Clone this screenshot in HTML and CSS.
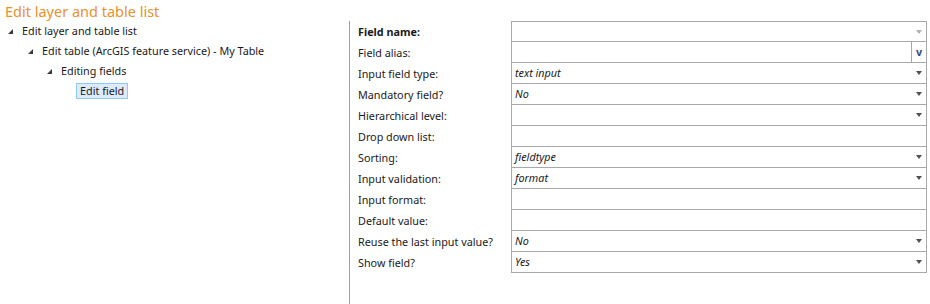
FILE: index.html
```html
<!DOCTYPE html>
<html lang="en">
<head>
    <meta charset="UTF-8">
    <title>Edit layer and table list</title>
    <link rel="stylesheet" href="styles.css">
</head>
<body>
    <div class="title">Edit layer and table list</div>
    <div class="main">
        <div class="tree">
            <div class="node lvl1"><span class="tri"></span>Edit layer and table list</div>
            <div class="node lvl2"><span class="tri"></span>Edit table (ArcGIS feature service) - My Table</div>
            <div class="node lvl3"><span class="tri"></span>Editing fields</div>
            <div class="node lvl4"><span class="sel">Edit field</span></div>
        </div>
        <div class="props">
            <div class="label bold">Field name:</div>
            <div class="field first"><span class="value"></span><span class="arrow off"></span></div>

            <div class="label">Field alias:</div>
            <div class="field"><span class="value"></span><span class="vbtn">v</span></div>

            <div class="label">Input field type:</div>
            <div class="field"><span class="value">text input</span><span class="arrow"></span></div>

            <div class="label">Mandatory field?</div>
            <div class="field"><span class="value">No</span><span class="arrow"></span></div>

            <div class="label">Hierarchical level:</div>
            <div class="field"><span class="value"></span><span class="arrow"></span></div>

            <div class="label">Drop down list:</div>
            <div class="field"><span class="value"></span></div>

            <div class="label">Sorting:</div>
            <div class="field"><span class="value">fieldtype</span><span class="arrow"></span></div>

            <div class="label">Input validation:</div>
            <div class="field"><span class="value">format</span><span class="arrow"></span></div>

            <div class="label">Input format:</div>
            <div class="field"><span class="value"></span></div>

            <div class="label">Default value:</div>
            <div class="field"><span class="value"></span></div>

            <div class="label">Reuse the last input value?</div>
            <div class="field"><span class="value">No</span><span class="arrow"></span></div>

            <div class="label">Show field?</div>
            <div class="field"><span class="value">Yes</span><span class="arrow"></span></div>
        </div>
    </div>
</body>
</html>
```

FILE: styles.css
```css
body {
    font-family: 'Noto Sans', 'Open Sans', sans-serif;
    font-size: 10.8px;
    color: #1a1a1a;
    background: #fff;
    margin: 0;
    padding: 0;
    height: 304px;
    overflow: hidden;
}
.title {
    color: #e8912d;
    font-size: 14.5px;
    height: 21px;
    line-height: 22px;
    padding-left: 5px;
}
.main {
    display: flex;
    height: 283px;
}
.tree {
    width: 349px;
}
.node {
    height: 20px;
    line-height: 20px;
    display: flex;
    align-items: center;
}
.lvl1 { padding-left: 8px; }
.lvl2 { padding-left: 28px; }
.lvl3 { padding-left: 47px; }
.lvl4 { padding-left: 76px; }
.tri {
    width: 0;
    height: 0;
    border-left: 5px solid transparent;
    border-bottom: 5px solid #3c3c3c;
    margin-right: 9px;
    margin-top: 1px;
}
.sel {
    background: #dcebfc;
    border: 1px solid #8fc8f0;
    padding: 0 3px;
    line-height: 13px;
    height: 14px;
    display: inline-block;
}
.props {
    flex: 1;
    border-left: 1px solid #a0a0a0;
    display: grid;
    grid-template-columns: 161px 416px;
    grid-auto-rows: 21px;
    align-content: start;
}
.label {
    padding-left: 8px;
    line-height: 21px;
    white-space: nowrap;
}
.bold {
    font-weight: bold;
}
.field {
    border: 1px solid #a9a9a9;
    border-top: none;
    display: flex;
    align-items: center;
    height: 21px;
    box-sizing: border-box;
}
.field.first {
    border-top: 1px solid #a9a9a9;
}
.value {
    flex: 1;
    font-style: italic;
    padding-left: 3px;
    line-height: 20px;
}
.arrow {
    width: 0;
    height: 0;
    border-left: 3px solid transparent;
    border-right: 3px solid transparent;
    border-top: 4px solid #505050;
    margin-right: 4px;
}
.arrow.off {
    border-top-color: #b0b0b0;
}
.vbtn {
    width: 14px;
    height: 100%;
    border-left: 1px solid #a9a9a9;
    text-align: center;
    font-weight: bold;
    color: #3a4a7a;
    line-height: 19px;
}
```
